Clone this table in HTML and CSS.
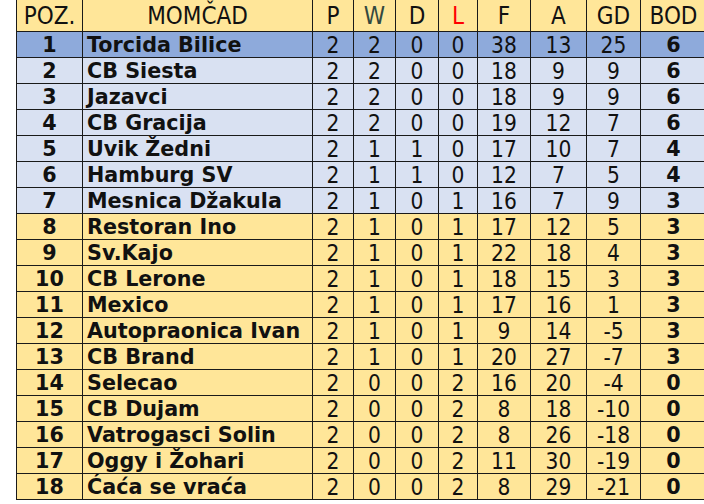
FILE: index.html
```html
<!DOCTYPE html>
<html>
<head>
<meta charset="utf-8">
<link rel="stylesheet" href="styles.css">
</head>
<body>
<table class="standings">
  <colgroup>
    <col class="c-poz"><col class="c-team"><col class="c-p"><col class="c-w"><col class="c-d"><col class="c-l"><col class="c-f"><col class="c-a"><col class="c-gd"><col class="c-bod">
  </colgroup>
  <thead>
    <tr class="head">
      <th>POZ.</th><th>MOMČAD</th><th>P</th><th class="h-w">W</th><th>D</th><th class="h-l">L</th><th>F</th><th>A</th><th>GD</th><th>BOD</th>
    </tr>
  </thead>
  <tbody>
    <tr class="lead"><td class="pos">1</td><td class="team">Torcida Bilice</td><td>2</td><td>2</td><td>0</td><td>0</td><td>38</td><td>13</td><td>25</td><td class="pts">6</td></tr>
    <tr class="blue"><td class="pos">2</td><td class="team">CB Siesta</td><td>2</td><td>2</td><td>0</td><td>0</td><td>18</td><td>9</td><td>9</td><td class="pts">6</td></tr>
    <tr class="blue"><td class="pos">3</td><td class="team">Jazavci</td><td>2</td><td>2</td><td>0</td><td>0</td><td>18</td><td>9</td><td>9</td><td class="pts">6</td></tr>
    <tr class="blue"><td class="pos">4</td><td class="team">CB Gracija</td><td>2</td><td>2</td><td>0</td><td>0</td><td>19</td><td>12</td><td>7</td><td class="pts">6</td></tr>
    <tr class="blue"><td class="pos">5</td><td class="team">Uvik Žedni</td><td>2</td><td>1</td><td>1</td><td>0</td><td>17</td><td>10</td><td>7</td><td class="pts">4</td></tr>
    <tr class="blue"><td class="pos">6</td><td class="team">Hamburg SV</td><td>2</td><td>1</td><td>1</td><td>0</td><td>12</td><td>7</td><td>5</td><td class="pts">4</td></tr>
    <tr class="blue"><td class="pos">7</td><td class="team">Mesnica Džakula</td><td>2</td><td>1</td><td>0</td><td>1</td><td>16</td><td>7</td><td>9</td><td class="pts">3</td></tr>
    <tr class="orange"><td class="pos">8</td><td class="team">Restoran Ino</td><td>2</td><td>1</td><td>0</td><td>1</td><td>17</td><td>12</td><td>5</td><td class="pts">3</td></tr>
    <tr class="orange"><td class="pos">9</td><td class="team">Sv.Kajo</td><td>2</td><td>1</td><td>0</td><td>1</td><td>22</td><td>18</td><td>4</td><td class="pts">3</td></tr>
    <tr class="orange"><td class="pos">10</td><td class="team">CB Lerone</td><td>2</td><td>1</td><td>0</td><td>1</td><td>18</td><td>15</td><td>3</td><td class="pts">3</td></tr>
    <tr class="orange"><td class="pos">11</td><td class="team">Mexico</td><td>2</td><td>1</td><td>0</td><td>1</td><td>17</td><td>16</td><td>1</td><td class="pts">3</td></tr>
    <tr class="orange"><td class="pos">12</td><td class="team">Autopraonica Ivan</td><td>2</td><td>1</td><td>0</td><td>1</td><td>9</td><td>14</td><td>-5</td><td class="pts">3</td></tr>
    <tr class="orange"><td class="pos">13</td><td class="team">CB Brand</td><td>2</td><td>1</td><td>0</td><td>1</td><td>20</td><td>27</td><td>-7</td><td class="pts">3</td></tr>
    <tr class="orange"><td class="pos">14</td><td class="team">Selecao</td><td>2</td><td>0</td><td>0</td><td>2</td><td>16</td><td>20</td><td>-4</td><td class="pts">0</td></tr>
    <tr class="orange"><td class="pos">15</td><td class="team">CB Dujam</td><td>2</td><td>0</td><td>0</td><td>2</td><td>8</td><td>18</td><td>-10</td><td class="pts">0</td></tr>
    <tr class="orange"><td class="pos">16</td><td class="team">Vatrogasci Solin</td><td>2</td><td>0</td><td>0</td><td>2</td><td>8</td><td>26</td><td>-18</td><td class="pts">0</td></tr>
    <tr class="orange"><td class="pos">17</td><td class="team">Oggy i Žohari</td><td>2</td><td>0</td><td>0</td><td>2</td><td>11</td><td>30</td><td>-19</td><td class="pts">0</td></tr>
    <tr class="orange"><td class="pos">18</td><td class="team">Ćaća se vraća</td><td>2</td><td>0</td><td>0</td><td>2</td><td>8</td><td>29</td><td>-21</td><td class="pts">0</td></tr>
  </tbody>
</table>
</body>
</html>
```
FILE: styles.css
```css
html, body {
  margin: 0;
  padding: 0;
  background: #ffffff;
  overflow: hidden;
}

.standings {
  margin-left: 16px;
  border-collapse: collapse;
  table-layout: fixed;
  width: 690px;
  font-family: "DejaVu Sans Condensed", "DejaVu Sans", sans-serif;
  font-size: 22.5px;
  color: #111111;
}

.c-poz { width: 66px; }
.c-team { width: 230px; }
.c-p { width: 41px; }
.c-w { width: 42px; }
.c-d { width: 43px; }
.c-l { width: 39px; }
.c-f { width: 53px; }
.c-a { width: 56px; }
.c-gd { width: 54px; }
.c-bod { width: 66px; }

.standings th,
.standings td {
  border: 1px solid #1a1a1a;
  padding: 2px 0 0 0;
  text-align: center;
  line-height: 23px;
  height: 23px;
  white-space: nowrap;
  overflow: hidden;
}

.standings th {
  font-weight: normal;
  font-size: 24px;
  background: #ffe699;
  border-top: none;
  padding: 1px 0 0 0;
  height: 30px;
  line-height: 30px;
}

.h-w { color: #34493f; }
.h-l { color: #ff0000; }

.lead td { background: #8eaadb; }
.blue td { background: #d9e1f2; }
.orange td { background: #ffe699; }

.standings td.pos,
.standings td.team,
.standings td.pts {
  font-family: "DejaVu Sans", sans-serif;
  font-weight: bold;
  font-size: 20.7px;
}

.standings td.team {
  text-align: left;
  padding-left: 4px;
}
```
